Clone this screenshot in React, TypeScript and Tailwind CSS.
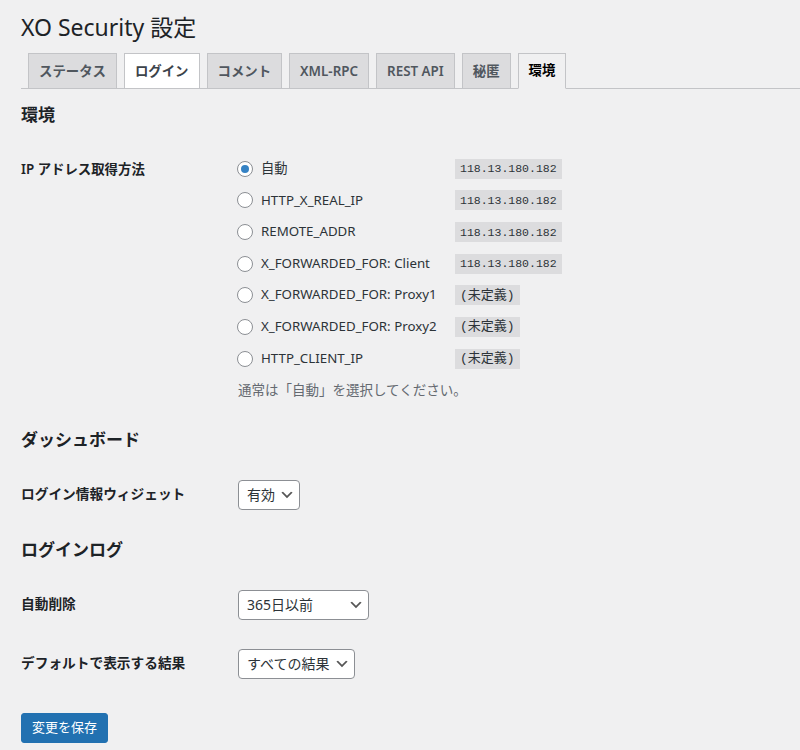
import { useState } from 'react';

const font = "font-['Noto_Sans','Noto_Sans_CJK_JP',sans-serif]";

const tabs = ['ステータス', 'ログイン', 'コメント', 'XML-RPC', 'REST API', '秘匿', '環境'];

const ipOptions = [
  { label: '自動', value: '118.13.180.182' },
  { label: 'HTTP_X_REAL_IP', value: '118.13.180.182' },
  { label: 'REMOTE_ADDR', value: '118.13.180.182' },
  { label: 'X_FORWARDED_FOR: Client', value: '118.13.180.182' },
  { label: 'X_FORWARDED_FOR: Proxy1', value: '(未定義)' },
  { label: 'X_FORWARDED_FOR: Proxy2', value: '(未定義)' },
  { label: 'HTTP_CLIENT_IP', value: '(未定義)' },
];

function Chevron() {
  return (
    <svg width="16" height="16" viewBox="0 0 20 20" className="shrink-0">
      <path d="M5 6l5 5 5-5 2 1-7 7-7-7 2-1z" fill="#555" />
    </svg>
  );
}

function Select({ value, width }: { value: string; width: string }) {
  return (
    <div
      className={`${width} h-[30px] flex items-center justify-between pl-[8px] pr-[4px] bg-white border border-[#8c8f94] rounded-[4px] text-[14px] text-[#2c3338]`}
    >
      <span>{value}</span>
      <Chevron />
    </div>
  );
}

function Row({ label, children }: { label: string; children: React.ReactNode }) {
  return (
    <div className="flex items-center mt-[29px]">
      <div className="w-[217px] text-[13.7px] font-semibold text-[#1d2327]">{label}</div>
      {children}
    </div>
  );
}

export default function App() {
  const [hovered] = useState(1);
  const active = 6;

  return (
    <div className={`${font} min-h-screen bg-[#f0f0f1] pl-[21px] pt-[12px] text-[#1d2327]`}>
      <h1 className="text-[23px] leading-[30px] font-normal">XO Security 設定</h1>

      {/* Tabs */}
      <div className="mt-[11px] flex items-start border-b border-[#c3c4c7]">
        {tabs.map((t, i) => (
          <div
            key={t}
            className={
              i === active
                ? 'ml-[7px] h-[36px] -mb-px px-[10px] flex items-center pb-px border border-[#c3c4c7] border-b-[#f0f0f1] bg-[#f0f0f1] text-[13.4px] font-semibold text-black'
                : `ml-[7px] h-[35px] px-[10px] flex items-center border border-b-0 border-[#c3c4c7] text-[13.4px] font-semibold ${
                    i === hovered ? 'bg-white text-[#3c434a]' : 'bg-[#dcdcde] text-[#50575e]'
                  }`
            }
          >
            {t}
          </div>
        ))}
      </div>

      {/* 環境 */}
      <h2 className="mt-[15px] text-[17px] leading-[22px] font-semibold">環境</h2>

      <div className="flex mt-[27px]">
        <div className="w-[217px] h-[31.67px] flex items-center text-[13.4px] font-semibold">IP アドレス取得方法</div>
        <div>
          {ipOptions.map((o, i) => (
            <div key={o.label} className="h-[31.67px] flex items-center">
              <div className="w-[217px] flex items-center">
                <span className="w-[16px] h-[16px] -ml-px rounded-full border border-[#8c8f94] bg-white flex items-center justify-center">
                  {i === 0 && <span className="w-[8px] h-[8px] rounded-full bg-[#3582c4]" />}
                </span>
                <span className="ml-[8px] text-[13.3px] text-[#2c3338]">{o.label}</span>
              </div>
              <code
                className={`h-[20px] px-[5px] flex items-center bg-[#dcdcde] font-['Liberation_Mono','Noto_Sans_CJK_JP',monospace] text-[#2c3338] ${
                  o.value.startsWith('(') ? 'text-[13px]' : 'text-[11.5px]'
                }`}
              >
                {o.value}
              </code>
            </div>
          ))}
          <p className="mt-[5px] text-[13.5px] leading-[20px] text-[#646970]">通常は「自動」を選択してください。</p>
        </div>
      </div>

      {/* ダッシュボード */}
      <h2 className="mt-[29px] text-[17px] leading-[22px] font-semibold">ダッシュボード</h2>
      <Row label="ログイン情報ウィジェット">
        <Select value="有効" width="w-[62px]" />
      </Row>

      {/* ログインログ */}
      <h2 className="mt-[29px] text-[17px] leading-[22px] font-semibold">ログインログ</h2>
      <Row label="自動削除">
        <Select value="365日以前" width="w-[131px]" />
      </Row>
      <Row label="デフォルトで表示する結果">
        <Select value="すべての結果" width="w-[117px]" />
      </Row>

      <button className="mt-[34px] h-[30px] px-[10px] rounded-[3px] bg-[#2271b1] border border-[#2271b1] text-white text-[13px]">
        変更を保存
      </button>
    </div>
  );
}
